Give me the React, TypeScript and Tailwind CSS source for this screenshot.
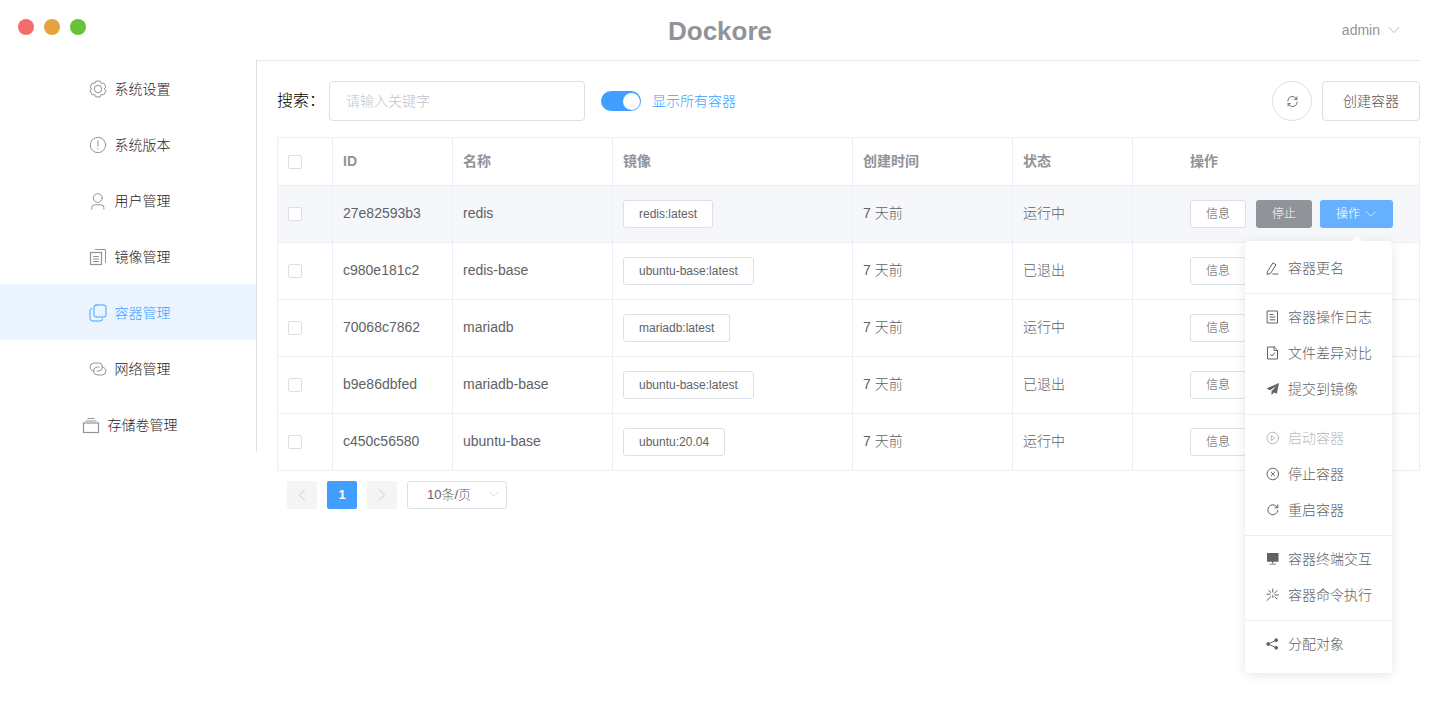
import React from "react";
import { ChevronDown, ChevronLeft, ChevronRight } from "lucide-react";

const font = { fontFamily: '"Liberation Sans","Noto Sans CJK SC",sans-serif' };

const S = ({ children, className, size = 16 }: { children: React.ReactNode; className?: string; size?: number }) => (
  <svg width={size} height={size} viewBox={`0 0 ${size} ${size}`} fill="none" stroke="currentColor" strokeWidth="1" strokeLinecap="round" strokeLinejoin="round" className={className}>
    {children}
  </svg>
);

const gearPoints = Array.from({ length: 6 }, (_, k) => {
  const a = k * 60 - 90;
  const pt = (deg: number, r: number) => `${(9 + r * Math.cos((deg * Math.PI) / 180)).toFixed(2)},${(9 + r * Math.sin((deg * Math.PI) / 180)).toFixed(2)}`;
  return [pt(a - 30, 6.4), pt(a - 15, 8.2), pt(a + 15, 8.2)].join(" ");
}).join(" ");

const IconGear = () => (
  <svg width="18" height="18" viewBox="0 0 18 18" fill="none" stroke="currentColor" strokeLinejoin="round">
    <polygon points={gearPoints} />
    <circle cx="9" cy="9" r="3.7" />
  </svg>
);
const IconAlert = () => (
  <svg width="18" height="18" viewBox="0 0 18 18" fill="none" stroke="currentColor" strokeLinecap="round">
    <circle cx="9" cy="9" r="7.7" />
    <path d="M9 5v5.2M9 12.6v.4" />
  </svg>
);
const IconUser = () => (
  <svg width="18" height="18" viewBox="0 0 18 18" fill="none" stroke="currentColor" strokeLinecap="round">
    <circle cx="8.8" cy="6" r="4.4" />
    <path d="M2.7 17v-1.2a3 3 0 0 1 3-3h6.2a3 3 0 0 1 3 3V17" />
  </svg>
);
const IconImage = () => (
  <svg width="18" height="18" viewBox="0 0 18 18" fill="none" stroke="currentColor" strokeLinecap="round">
    <rect x="1.5" y="4.5" width="11" height="12" strokeWidth="1.2" />
    <path d="M6.5 1.5h10v13M4.5 8.5h5M4.5 11h5M4.5 13.5h5" />
  </svg>
);
const IconContainer = () => (
  <svg width="18" height="18" viewBox="0 0 18 18" fill="none" stroke="currentColor" strokeLinecap="round">
    <rect x="5" y="1" width="12" height="12" rx="2" />
    <path d="M3 4.5A2 2 0 0 0 1 6.5v8A2.5 2.5 0 0 0 3.5 17h8a2 2 0 0 0 2-2" />
  </svg>
);
const IconNetwork = () => (
  <svg width="18" height="18" viewBox="0 0 18 18" fill="none" stroke="currentColor" strokeLinecap="round">
    <path d="M5 11A4 4 0 0 1 5 3h4.5a4 4 0 0 1 0 8H8" />
    <path d="M13 7a4 4 0 0 1 0 8H8.5a4 4 0 0 1 0-8H10" />
  </svg>
);
const IconVolume = () => (
  <svg width="18" height="18" viewBox="0 0 18 18" fill="none" stroke="currentColor">
    <rect x="1.5" y="7" width="15" height="9.5" strokeWidth="1.2" />
    <path d="M3.5 5h11M5.5 2.5h7" />
  </svg>
);

const nav = [
  { label: "系统设置", icon: <IconGear /> },
  { label: "系统版本", icon: <IconAlert /> },
  { label: "用户管理", icon: <IconUser /> },
  { label: "镜像管理", icon: <IconImage /> },
  { label: "容器管理", icon: <IconContainer />, active: true },
  { label: "网络管理", icon: <IconNetwork /> },
  { label: "存储卷管理", icon: <IconVolume /> },
];

const rows = [
  { id: "27e82593b3", name: "redis", image: "redis:latest", state: "运行中" },
  { id: "c980e181c2", name: "redis-base", image: "ubuntu-base:latest", state: "已退出" },
  { id: "70068c7862", name: "mariadb", image: "mariadb:latest", state: "运行中" },
  { id: "b9e86dbfed", name: "mariadb-base", image: "ubuntu-base:latest", state: "已退出" },
  { id: "c450c56580", name: "ubuntu-base", image: "ubuntu:20.04", state: "运行中" },
];

const Check = () => <span className="block w-[14px] h-[14px] bg-white border border-[#dcdfe6] rounded-[2px]" />;

const menu: { label: string; disabled?: boolean; icon: React.ReactNode }[][] = [
  [
    {
      label: "容器更名",
      icon: (
        <S size={14}>
          <path d="M1.5 10.5 7 1.8l3 1.9-5.5 8.8-3 .7zM6.8 13h5.2" />
        </S>
      ),
    },
  ],
  [
    {
      label: "容器操作日志",
      icon: (
        <S size={14}>
          <rect x="1.5" y="1" width="10" height="12" />
          <path d="M4 4.5h3M4 7h5M4 9.8h5" />
        </S>
      ),
    },
    {
      label: "文件差异对比",
      icon: (
        <S size={14}>
          <path d="M8 1H1.5v12h10V4.5zM8 1v3.5h3.5M4.5 8.5 6 10l2.5-3" />
        </S>
      ),
    },
    {
      label: "提交到镜像",
      icon: (
        <svg width="14" height="14" viewBox="0 0 14 14" fill="currentColor">
          <path d="M13 1 .5 6.5l3.5 1.8L10.5 4 5.5 9.2V13l2.5-2.6 2.8 1.4z" />
        </svg>
      ),
    },
  ],
  [
    {
      label: "启动容器",
      disabled: true,
      icon: (
        <S size={14}>
          <circle cx="6.8" cy="7" r="5.8" />
          <path d="M5.6 4.8 8.8 7l-3.2 2.2z" />
        </S>
      ),
    },
    {
      label: "停止容器",
      icon: (
        <S size={14}>
          <circle cx="6.8" cy="7" r="5.8" />
          <path d="m5 5.2 3.6 3.6M8.6 5.2 5 8.8" />
        </S>
      ),
    },
    {
      label: "重启容器",
      icon: (
        <S size={14}>
          <path d="M11.8 7.5A5 5 0 1 1 10.3 3.2L11.8 4.8M11.8 1.8v3H9" />
        </S>
      ),
    },
  ],
  [
    {
      label: "容器终端交互",
      icon: (
        <svg width="14" height="14" viewBox="0 0 14 14" fill="currentColor">
          <path d="M1 1h11.5v8.8H1zM6.2 9.8h1v1.7h-1zM3.5 11.8h6.5v.8H3.5z" />
        </svg>
      ),
    },
    {
      label: "容器命令执行",
      icon: (
        <S size={14}>
          <path d="M6.8 1v3M6.8 7.5v2M1 12.5 4.8 8.8M8.5 5.3l2.7-2.7M1 6.2h3M9 7h3.5M2.8 2.5l1.8 2M9 9l2 2" />
        </S>
      ),
    },
  ],
  [
    {
      label: "分配对象",
      icon: (
        <svg width="14" height="14" viewBox="0 0 14 14" fill="currentColor" stroke="currentColor" strokeWidth="1">
          <circle cx="2.2" cy="7" r="1.4" />
          <circle cx="10.2" cy="3.2" r="1.4" />
          <circle cx="10.2" cy="10.8" r="1.4" />
          <path d="M10.2 3.2 2.2 7l8 3.8" fill="none" />
        </svg>
      ),
    },
  ],
];

export default function App() {
  return (
    <div style={font} className="relative w-[1440px] h-[720px] overflow-hidden bg-white text-[14px] font-light text-[#606266]">
      <header className="grid grid-cols-[1fr_auto_1fr] h-[60px]">
        <div className="flex gap-[10px] pl-[18px] pt-[19px]">
          <span className="w-4 h-4 rounded-full bg-[#f56c6c]" />
          <span className="w-4 h-4 rounded-full bg-[#e6a23c]" />
          <span className="w-4 h-4 rounded-full bg-[#67c23a]" />
        </div>
        <div className="pt-[14px] text-[26px] leading-[34px] font-bold text-[#909399]">Dockore</div>
        <div className="flex justify-end items-start pt-[22px] pr-[41px] text-[#909399]">
          <span className="leading-4">admin</span>
          <ChevronDown size={20} strokeWidth={0.8} className="ml-[4px] -mt-[2px] -mr-[5px]" />
        </div>
      </header>

      <div className="flex">
        <aside className="w-[257px] h-[392px] border-r border-[#dcdfe6] shrink-0">
          {nav.map((n) => (
            <div key={n.label} className={`h-14 flex items-center justify-center gap-2 pt-[2px] pl-[3px] ${n.active ? "bg-[#ecf5ff] text-[#409eff]" : "text-[#1f2022]"}`}>
              <span className={n.active ? "text-[#409eff] flex" : "text-[#909399] flex"}>{n.icon}</span>
              <span>{n.label}</span>
            </div>
          ))}
        </aside>

        <main className="flex-1 mr-5 border-t border-[#e4e7ed] pl-5 pt-5 min-w-0">
          <div className="flex items-center h-10">
            <span className="text-[16px] text-[#000] w-[52px] shrink-0">搜索：</span>
            <div className="w-[256px] h-10 border border-[#dcdfe6] rounded-[4px] pl-4 flex items-center text-[#c0c4cc]">请输入关键字</div>
            <div className="ml-4 w-10 h-5 rounded-full bg-[#409eff] relative">
              <span className="absolute right-[1.5px] top-[1.5px] w-[17px] h-[17px] rounded-full bg-white" />
            </div>
            <span className="ml-[11px] text-[#409eff]">显示所有容器</span>
            <div className="ml-auto w-10 h-10 rounded-full border border-[#dcdfe6] flex items-center justify-center">
              <svg width="11" height="11" viewBox="0 0 12 12" fill="none" stroke="currentColor" strokeLinecap="round" strokeLinejoin="round">
                <path d="M.8 5.5A5 5 0 0 1 9.8 2.5l1 1.2M10.8 1v2.7H8.2M11.2 6.5A5 5 0 0 1 2.2 9.5l-1-1.2M1.2 11V8.3h2.6" />
              </svg>
            </div>
            <div className="ml-[10px] w-[98px] h-10 border border-[#dcdfe6] rounded-[4px] flex items-center justify-center text-[#505256]">创建容器</div>
          </div>

          <table className="mt-4 w-[1142px] table-fixed border-collapse">
            <colgroup>
              <col className="w-[55px]" />
              <col className="w-[120px]" />
              <col className="w-[160px]" />
              <col className="w-[240px]" />
              <col className="w-[160px]" />
              <col className="w-[120px]" />
              <col className="w-[287px]" />
            </colgroup>
            <thead>
              <tr className="h-12 text-left font-bold text-[#909399]">
                <th className="border border-[#ebeef5] pl-[10px]"><Check /></th>
                <th className="border border-[#ebeef5] pl-[10px]">ID</th>
                <th className="border border-[#ebeef5] pl-[10px]">名称</th>
                <th className="border border-[#ebeef5] pl-[10px]">镜像</th>
                <th className="border border-[#ebeef5] pl-[10px]">创建时间</th>
                <th className="border border-[#ebeef5] pl-[10px]">状态</th>
                <th className="border border-[#ebeef5] pl-[57px]">操作</th>
              </tr>
            </thead>
            <tbody>
              {rows.map((r, i) => (
                <tr key={r.id} className={`h-[57px] ${i === 0 ? "bg-[#f5f7fa]" : ""}`}>
                  <td className="border border-[#ebeef5] pl-[10px]"><Check /></td>
                  <td className="border border-[#ebeef5] pl-[10px] pb-[2px]">{r.id}</td>
                  <td className="border border-[#ebeef5] pl-[10px] pb-[2px]">{r.name}</td>
                  <td className="border border-[#ebeef5] pl-[10px]">
                    <span className="inline-flex items-center h-7 px-[15px] bg-white border border-[#dcdfe6] rounded-[3px] text-[12px] align-middle">{r.image}</span>
                  </td>
                  <td className="border border-[#ebeef5] pl-[10px] pb-[2px]">7 天前</td>
                  <td className="border border-[#ebeef5] pl-[10px] pb-[2px]">{r.state}</td>
                  <td className="border border-[#ebeef5] pl-[57px]">
                    <div className="flex items-center text-[12px]">
                      <span className="w-14 h-7 bg-white border border-[#dcdfe6] rounded-[3px] flex items-center justify-center text-[#505256]">信息</span>
                      {i === 0 && (
                        <>
                          <span className="ml-[10px] w-14 h-7 bg-[#909399] text-white rounded-[3px] flex items-center justify-center">停止</span>
                          <span className="ml-2 w-[73px] h-7 bg-[#66b1ff] text-white rounded-[3px] flex items-center pl-[16px] gap-[2px]">
                            操作
                            <ChevronDown size={18} strokeWidth={0.9} />
                          </span>
                        </>
                      )}
                    </div>
                  </td>
                </tr>
              ))}
            </tbody>
          </table>

          <div className="flex items-center mt-[10px] ml-[10px] h-7">
            <span className="w-[30px] h-7 bg-[#f4f4f5] rounded-[2px] flex items-center justify-center text-[#c0c4cc]"><ChevronLeft size={20} strokeWidth={1} /></span>
            <span className="ml-[10px] w-[30px] h-7 bg-[#409eff] rounded-[2px] flex items-center justify-center text-white text-[13px] font-bold">1</span>
            <span className="ml-[10px] w-[30px] h-7 bg-[#f4f4f5] rounded-[2px] flex items-center justify-center text-[#c0c4cc]"><ChevronRight size={20} strokeWidth={1} /></span>
            <span className="ml-[10px] w-[100px] h-7 border border-[#dcdfe6] rounded-[3px] flex items-center pl-[19px] text-[13px] relative">
              10条/页
              <ChevronDown size={18} strokeWidth={0.8} className="absolute right-[3px] top-[3px] text-[#c0c4cc]" />
            </span>
          </div>
        </main>
      </div>

      <div className="absolute left-[1245px] top-[241px] w-[147px] h-[432px] bg-white rounded-[4px] shadow-[0_2px_12px_0_rgba(0,0,0,0.1)] pt-[9px]">
        <span className="absolute -top-[5px] left-[106px] w-0 h-0 border-x-[6px] border-x-transparent border-b-[6px] border-b-white" />
        {menu.map((group, gi) => (
          <React.Fragment key={gi}>
            {gi > 0 && <div className="mt-[7px] mb-[5px] h-px bg-[#ebeef5]" />}
            {group.map((m) => (
              <div key={m.label} className={`h-9 flex items-center pl-[21px] ${m.disabled ? "text-[#bbb]" : "text-[#606266]"}`}>
                <span className="w-[22px] flex shrink-0">{m.icon}</span>
                <span className="whitespace-nowrap">{m.label}</span>
              </div>
            ))}
          </React.Fragment>
        ))}
      </div>
    </div>
  );
}
